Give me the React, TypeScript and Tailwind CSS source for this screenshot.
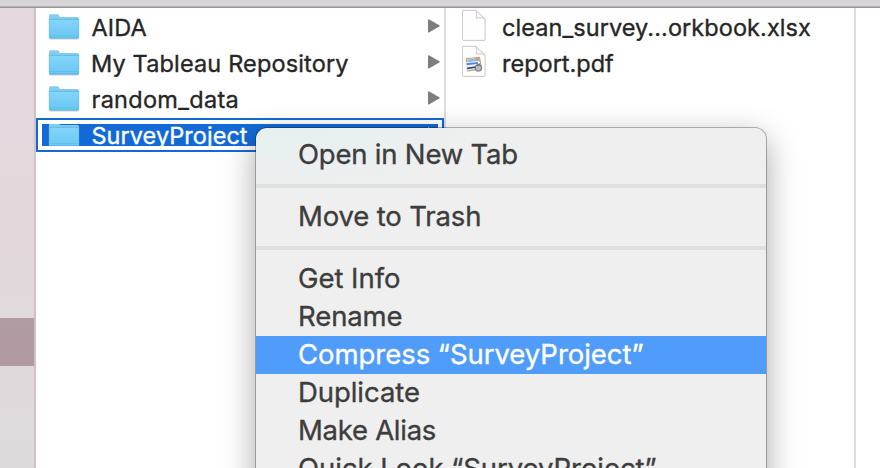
import React from "react";
import clsx from "clsx";

function FolderIcon() {
  return (
    <svg width="32" height="28" viewBox="0 0 32 28" className="shrink-0">
      <defs>
        <linearGradient id="folderFront" x1="0" y1="0" x2="0" y2="1">
          <stop offset="0" stopColor="#84d6fb" />
          <stop offset="1" stopColor="#69c6f4" />
        </linearGradient>
      </defs>
      <rect x="1.5" y="24" width="29" height="2" rx="1" fill="#000" opacity="0.1" />
      <path d="M1 1.6Q1 .2 2.6 .2H9.4Q10.4.2 11 1.2L11.6 2.4Q12 3 12.8 3H29.4Q31 3 31 4.6V8H1Z" fill="#84cef2" />
      <path d="M1 5H31V23.4Q31 24.4 30 24.4H2Q1 24.4 1 23.4Z" fill="url(#folderFront)" />
      <path d="M1.2 5.3H30.8" stroke="#60b4dc" strokeWidth="0.9" />
      <path d="M1.5 21.5H30.5" stroke="#5fb9e4" strokeWidth="0.6" />
      <path d="M1.3 24H30.7" stroke="#55acd6" strokeWidth="0.8" />
      <path d="M1.2 4V24M30.8 5V24" stroke="#68bce3" strokeWidth="0.5" />
    </svg>
  );
}

function DocumentIcon({ preview }: { preview?: boolean }) {
  return (
    <svg width="26" height="34" viewBox="0 0 26 34" className="-mt-px shrink-0">
      <path d="M2.5 1.6H14.5L23.5 11V30.5Q23.5 31.5 22.5 31.5H2.5Q1.5 31.5 1.5 30.5V2.6Q1.5 1.6 2.5 1.6Z" fill="#bbb" opacity="0.45" />
      <path d="M2.4 1.3H14.5L24.1 10.2V30.5Q24.1 31.4 23.2 31.4H2.4Q1.5 31.4 1.5 30.5V2.2Q1.5 1.3 2.4 1.3Z" fill="#fefefe" stroke="#c3c3c3" strokeWidth="0.9" />
      <path d="M14.5 1.3C15.8 3.4 15.6 6 15.2 9.1C18 8.8 22 8.4 24.1 10.2Z" fill="#f6f6f6" stroke="#c9c9c9" strokeWidth="0.9" />
      {preview && (
        <g>
          <path d="M5.2 13.7L18.5 12.3L20.3 22L6 24.5Z" fill="#fff" stroke="#b88d62" strokeWidth="0.9" />
          <path d="M6 14.4L18 13.2L18.4 16L6.6 17.6Z" fill="#91bce9" />
          <path d="M4.6 17.4L17.5 16L19 25.3L5.6 26.7Z" fill="#edf1f6" />
          <path d="M5.4 18.2L17 17L17.2 18.8L5.7 20.2Z" fill="#5688d0" />
          <path d="M6 22.6L17 21L17.3 22.6L6.3 24.2Z" fill="#2d4b80" />
          <path d="M6.3 25L14 24.2L14.2 25.4L6.5 26.4Z" fill="#c9aa86" />
          <path d="M13 13.2L18.2 12.7L19 17Z" fill="#d69a62" opacity="0.8" />
          <circle cx="17.4" cy="22.9" r="3.1" fill="#b9bfc5" stroke="#70757a" strokeWidth="1.1" />
          <path d="M14.6 20.2L19.2 18V20L16.5 21.4Z" fill="#74797c" />
        </g>
      )}
    </svg>
  );
}

function Arrow() {
  return (
    <svg width="12" height="14" viewBox="0 0 12 14" className="mr-1 ml-auto mt-[9px] shrink-0">
      <path d="M0 .8Q0-.1 .9.3L11.3 6.3Q12 6.9 11.3 7.5L.9 13.5Q0 13.9 0 13Z" fill="#7e7e7e" />
    </svg>
  );
}

const folders = [
  { name: "AIDA", pos: "ml-[11.5px] tracking-[0.1px]" },
  { name: "My Tableau Repository", pos: "ml-[11px] tracking-[0.148px]" },
  { name: "random_data", pos: "ml-[11.5px] tracking-[0.29px]" },
];

const menu = [
  [{ label: "Open in New Tab", pos: "tracking-[-0.207px]" }],
  [{ label: "Move to Trash", pos: "tracking-[-0.15px]" }],
  [
    { label: "Get Info", pos: "tracking-[-0.04px]" },
    { label: "Rename", pos: "tracking-[-0.1px]" },
    { label: "Compress “SurveyProject”", pos: "tracking-[-0.04px]", active: true },
    { label: "Duplicate", pos: "tracking-[-0.06px]" },
    { label: "Make Alias", pos: "tracking-[-0.273px]" },
    { label: "Quick Look “SurveyProject”", pos: "tracking-[-0.06px]" },
  ],
];

export default function App() {
  return (
    <div className="relative flex h-[468px] w-[880px] flex-col overflow-hidden bg-white font-[Inter,sans-serif] text-[23.5px] text-[#262626] [-webkit-text-stroke:0.35px]">
      <header className="h-2 shrink-0 border-b border-[#969496] bg-[#d7d4d8]">
        <div className="h-[7px] border-b border-[#b5b2b5]" />
      </header>
      <div className="flex min-h-0 flex-1">
        <aside className="w-9 shrink-0 border-r-2 border-[#cdc2c7] bg-linear-to-b from-[#e3d9de] via-[#e2d8dc] to-[#dedadb] pt-[310px]">
          <div className="h-12 bg-linear-to-b from-[#b19ca3] to-[#b199a1]" />
        </aside>

        <section className="w-[408px] shrink-0 pt-[2px]">
          {folders.map((f) => (
            <div key={f.name} className="flex h-9 items-start pl-3">
              <div className="pt-1">
                <FolderIcon />
              </div>
              <span className={clsx("whitespace-pre leading-[35px]", f.pos)}>{f.name}</span>
              <Arrow />
            </div>
          ))}
          <div className="h-[34px] border-2 border-[#136ad6] bg-white p-1">
            <div className="flex h-[22px] items-start overflow-hidden bg-[#136ad6] pl-[6px] text-white">
              <div className="-mt-[2px]">
                <FolderIcon />
              </div>
              <span className="-mt-[6px] ml-[11.5px] leading-[35px] tracking-[0.04px]">SurveyProject</span>
              <svg width="12" height="14" viewBox="0 0 12 14" className="mt-[3px] mr-[-2px] ml-auto shrink-0">
                <path d="M0 0L12 7L0 14Z" fill="#fff" />
              </svg>
            </div>
          </div>
        </section>

        <section className="w-[412px] shrink-0 border-x-2 border-[#dedede] pt-[2px] pl-[15px]">
          <div className="flex h-9">
            <DocumentIcon />
            <span className="ml-[15px] leading-[35px] tracking-[0.07px]">clean_survey...orkbook.xlsx</span>
          </div>
          <div className="flex h-9">
            <DocumentIcon preview />
            <span className="ml-[15px] leading-[35px]">report.pdf</span>
          </div>
        </section>
      </div>

      <nav className="absolute top-[128px] left-[256px] h-[400px] w-[510px] overflow-visible rounded-t-[11px] bg-[#efefef] bg-[radial-gradient(ellipse_190px_65px_at_40px_0px,#e6f0f0,#efefef)] bg-no-repeat pt-2 text-[27.5px] text-[#3d3d3d] shadow-[0_0_0_1px_rgba(0,0,0,0.28),0_10px_32px_rgba(0,0,0,0.36)]">
        {menu.map((group, i) => (
          <React.Fragment key={i}>
            {i > 0 && <hr className="my-[10px] h-1 border-0 bg-[#dedede]" />}
            {group.map((m) => (
              <div
                key={m.label}
                className={clsx(
                  "h-[38px] pl-[42px] leading-[36px] whitespace-nowrap",
                  m.pos,
                  "active" in m && m.active && "bg-[#4f9cfb] text-white",
                )}
              >
                {m.label}
              </div>
            ))}
          </React.Fragment>
        ))}
      </nav>
    </div>
  );
}
